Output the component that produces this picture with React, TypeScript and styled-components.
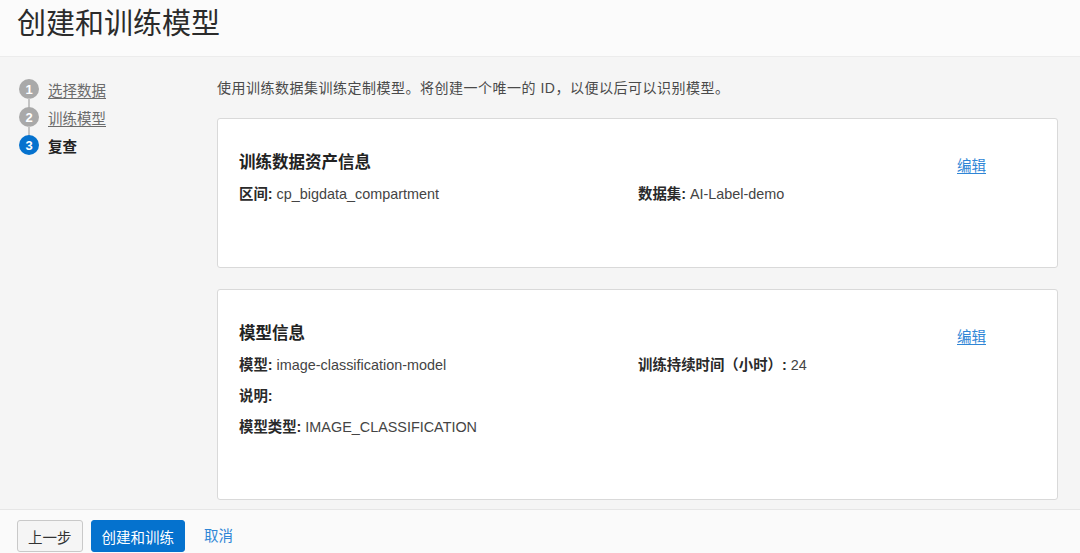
import React from "react";
import styled, { createGlobalStyle } from "styled-components";

const GlobalStyle = createGlobalStyle`
  html, body { margin: 0; padding: 0; }
  body {
    font-family: "Liberation Sans", Arial, "Noto Sans CJK SC", sans-serif;
    color: #333;
    background: #f5f5f5;
  }
  * { box-sizing: border-box; }
`;

const Page = styled.div`
  width: 1080px;
  height: 553px;
  display: flex;
  flex-direction: column;
  overflow: hidden;
  background: #f5f5f5;
`;

const Header = styled.header`
  height: 57px;
  flex: 0 0 57px;
  background: #fbfbfb;
  border-bottom: 1px solid #ececec;
  padding: 0 17px;
  display: flex;
  align-items: center;
`;

const Title = styled.h1`
  margin: 0 0 8px 0;
  font-size: 29px;
  font-weight: 400;
  color: #2b2b2b;
  line-height: 40px;
`;

const Main = styled.main`
  flex: 1;
  display: flex;
  overflow: hidden;
`;

const Sidebar = styled.nav`
  width: 217px;
  flex: 0 0 217px;
  padding: 18px 0 0 19px;
`;

const StepList = styled.ol`
  list-style: none;
  margin: 0;
  padding: 0;
  display: flex;
  flex-direction: column;
`;

const StepItem = styled.li<{ $last?: boolean }>`
  position: relative;
  display: flex;
  align-items: center;
  height: 28px;
  ${(p) =>
    !p.$last &&
    `&::after {
      content: "";
      position: absolute;
      left: 9px;
      top: 23px;
      width: 2px;
      height: 10px;
      background: #c4c4c4;
    }`}
`;

const StepCircle = styled.span<{ $active?: boolean }>`
  width: 20px;
  height: 20px;
  border-radius: 50%;
  background: ${(p) => (p.$active ? "#0572ce" : "#a9a9a9")};
  color: #fff;
  font-size: 13px;
  font-weight: 700;
  display: flex;
  align-items: center;
  justify-content: center;
  flex: 0 0 20px;
`;

const StepLabel = styled.span<{ $active?: boolean }>`
  margin-left: 9px;
  font-size: 14.5px;
  color: ${(p) => (p.$active ? "#222" : "#6b6b6b")};
  font-weight: ${(p) => (p.$active ? 700 : 400)};
  text-decoration: ${(p) => (p.$active ? "none" : "underline")};
  text-underline-offset: 2px;
`;

const Content = styled.section`
  flex: 1;
  padding: 21px 22px 0 0;
  display: flex;
  flex-direction: column;
  gap: 20px;
`;

const Intro = styled.p`
  margin: 0;
  font-size: 14px;
  line-height: 20px;
  color: #4a4a4a;
  letter-spacing: 0.5px;
`;

const Cards = styled.div`
  display: flex;
  flex-direction: column;
  gap: 21px;
`;

const Card = styled.div<{ $height: number }>`
  height: ${(p) => p.$height}px;
  background: #fff;
  border: 1px solid #d9d9d9;
  border-radius: 3px;
  display: flex;
  padding: 32px 0 0 21px;
`;

const CardBody = styled.div`
  flex: 1;
  display: flex;
  flex-direction: column;
  gap: 11px;
`;

const CardTitle = styled.h2`
  margin: 0;
  font-size: 16.5px;
  line-height: 22px;
  font-weight: 700;
  color: #222;
`;

const FieldGrid = styled.div`
  display: grid;
  grid-template-columns: 399px 1fr;
  row-gap: 11px;
`;

const Field = styled.div`
  font-size: 14.4px;
  line-height: 20px;
  color: #444;
  white-space: nowrap;
`;

const FieldLabel = styled.span`
  font-weight: 700;
  color: #2a2a2a;
`;

const EditColumn = styled.div`
  width: 100px;
  flex: 0 0 100px;
  padding-top: 5px;
`;

const EditLink = styled.a`
  font-size: 14.5px;
  line-height: 20px;
  color: #2f86d6;
  text-decoration: underline;
  text-underline-offset: 2px;
  cursor: pointer;
`;

const Footer = styled.footer`
  flex: 0 0 44px;
  height: 44px;
  background: #fafafa;
  border-top: 1px solid #e6e6e6;
  display: flex;
  align-items: flex-start;
  padding: 10px 17px 0;
  gap: 8px;
`;

const Button = styled.button<{ $primary?: boolean }>`
  height: 32px;
  padding: 0 10px;
  border-radius: 3px;
  font-family: inherit;
  font-size: 14.5px;
  cursor: pointer;
  border: 1px solid ${(p) => (p.$primary ? "#0572ce" : "#c9c9c9")};
  background: ${(p) => (p.$primary ? "#0572ce" : "#f5f5f5")};
  color: ${(p) => (p.$primary ? "#fff" : "#333")};
`;

const CancelLink = styled.a`
  margin-left: 11px;
  font-size: 14.5px;
  line-height: 32px;
  color: #2f86d6;
  cursor: pointer;
`;

type FieldDef = { label: string; value: string };

const InfoCard: React.FC<{ title: string; height: number; fields: (FieldDef | null)[] }> = ({
  title,
  height,
  fields,
}) => (
  <Card $height={height}>
    <CardBody>
      <CardTitle>{title}</CardTitle>
      <FieldGrid>
        {fields.map((f, i) =>
          f ? (
            <Field key={i}>
              <FieldLabel>{f.label}</FieldLabel> {f.value}
            </Field>
          ) : (
            <Field key={i} />
          )
        )}
      </FieldGrid>
    </CardBody>
    <EditColumn>
      <EditLink>编辑</EditLink>
    </EditColumn>
  </Card>
);

const steps = ["选择数据", "训练模型", "复查"];

export default function App() {
  return (
    <>
      <GlobalStyle />
      <Page>
        <Header>
          <Title>创建和训练模型</Title>
        </Header>
        <Main>
          <Sidebar>
            <StepList>
              {steps.map((s, i) => {
                const active = i === steps.length - 1;
                return (
                  <StepItem key={s} $last={active}>
                    <StepCircle $active={active}>{i + 1}</StepCircle>
                    <StepLabel $active={active}>{s}</StepLabel>
                  </StepItem>
                );
              })}
            </StepList>
          </Sidebar>
          <Content>
            <Intro>使用训练数据集训练定制模型。将创建一个唯一的 ID，以便以后可以识别模型。</Intro>
            <Cards>
              <InfoCard
                title="训练数据资产信息"
                height={150}
                fields={[
                  { label: "区间:", value: "cp_bigdata_compartment" },
                  { label: "数据集:", value: "AI-Label-demo" },
                ]}
              />
              <InfoCard
                title="模型信息"
                height={211}
                fields={[
                  { label: "模型:", value: "image-classification-model" },
                  { label: "训练持续时间（小时）:", value: "24" },
                  { label: "说明:", value: "" },
                  null,
                  { label: "模型类型:", value: "IMAGE_CLASSIFICATION" },
                  null,
                ]}
              />
            </Cards>
          </Content>
        </Main>
        <Footer>
          <Button>上一步</Button>
          <Button $primary>创建和训练</Button>
          <CancelLink>取消</CancelLink>
        </Footer>
      </Page>
    </>
  );
}
